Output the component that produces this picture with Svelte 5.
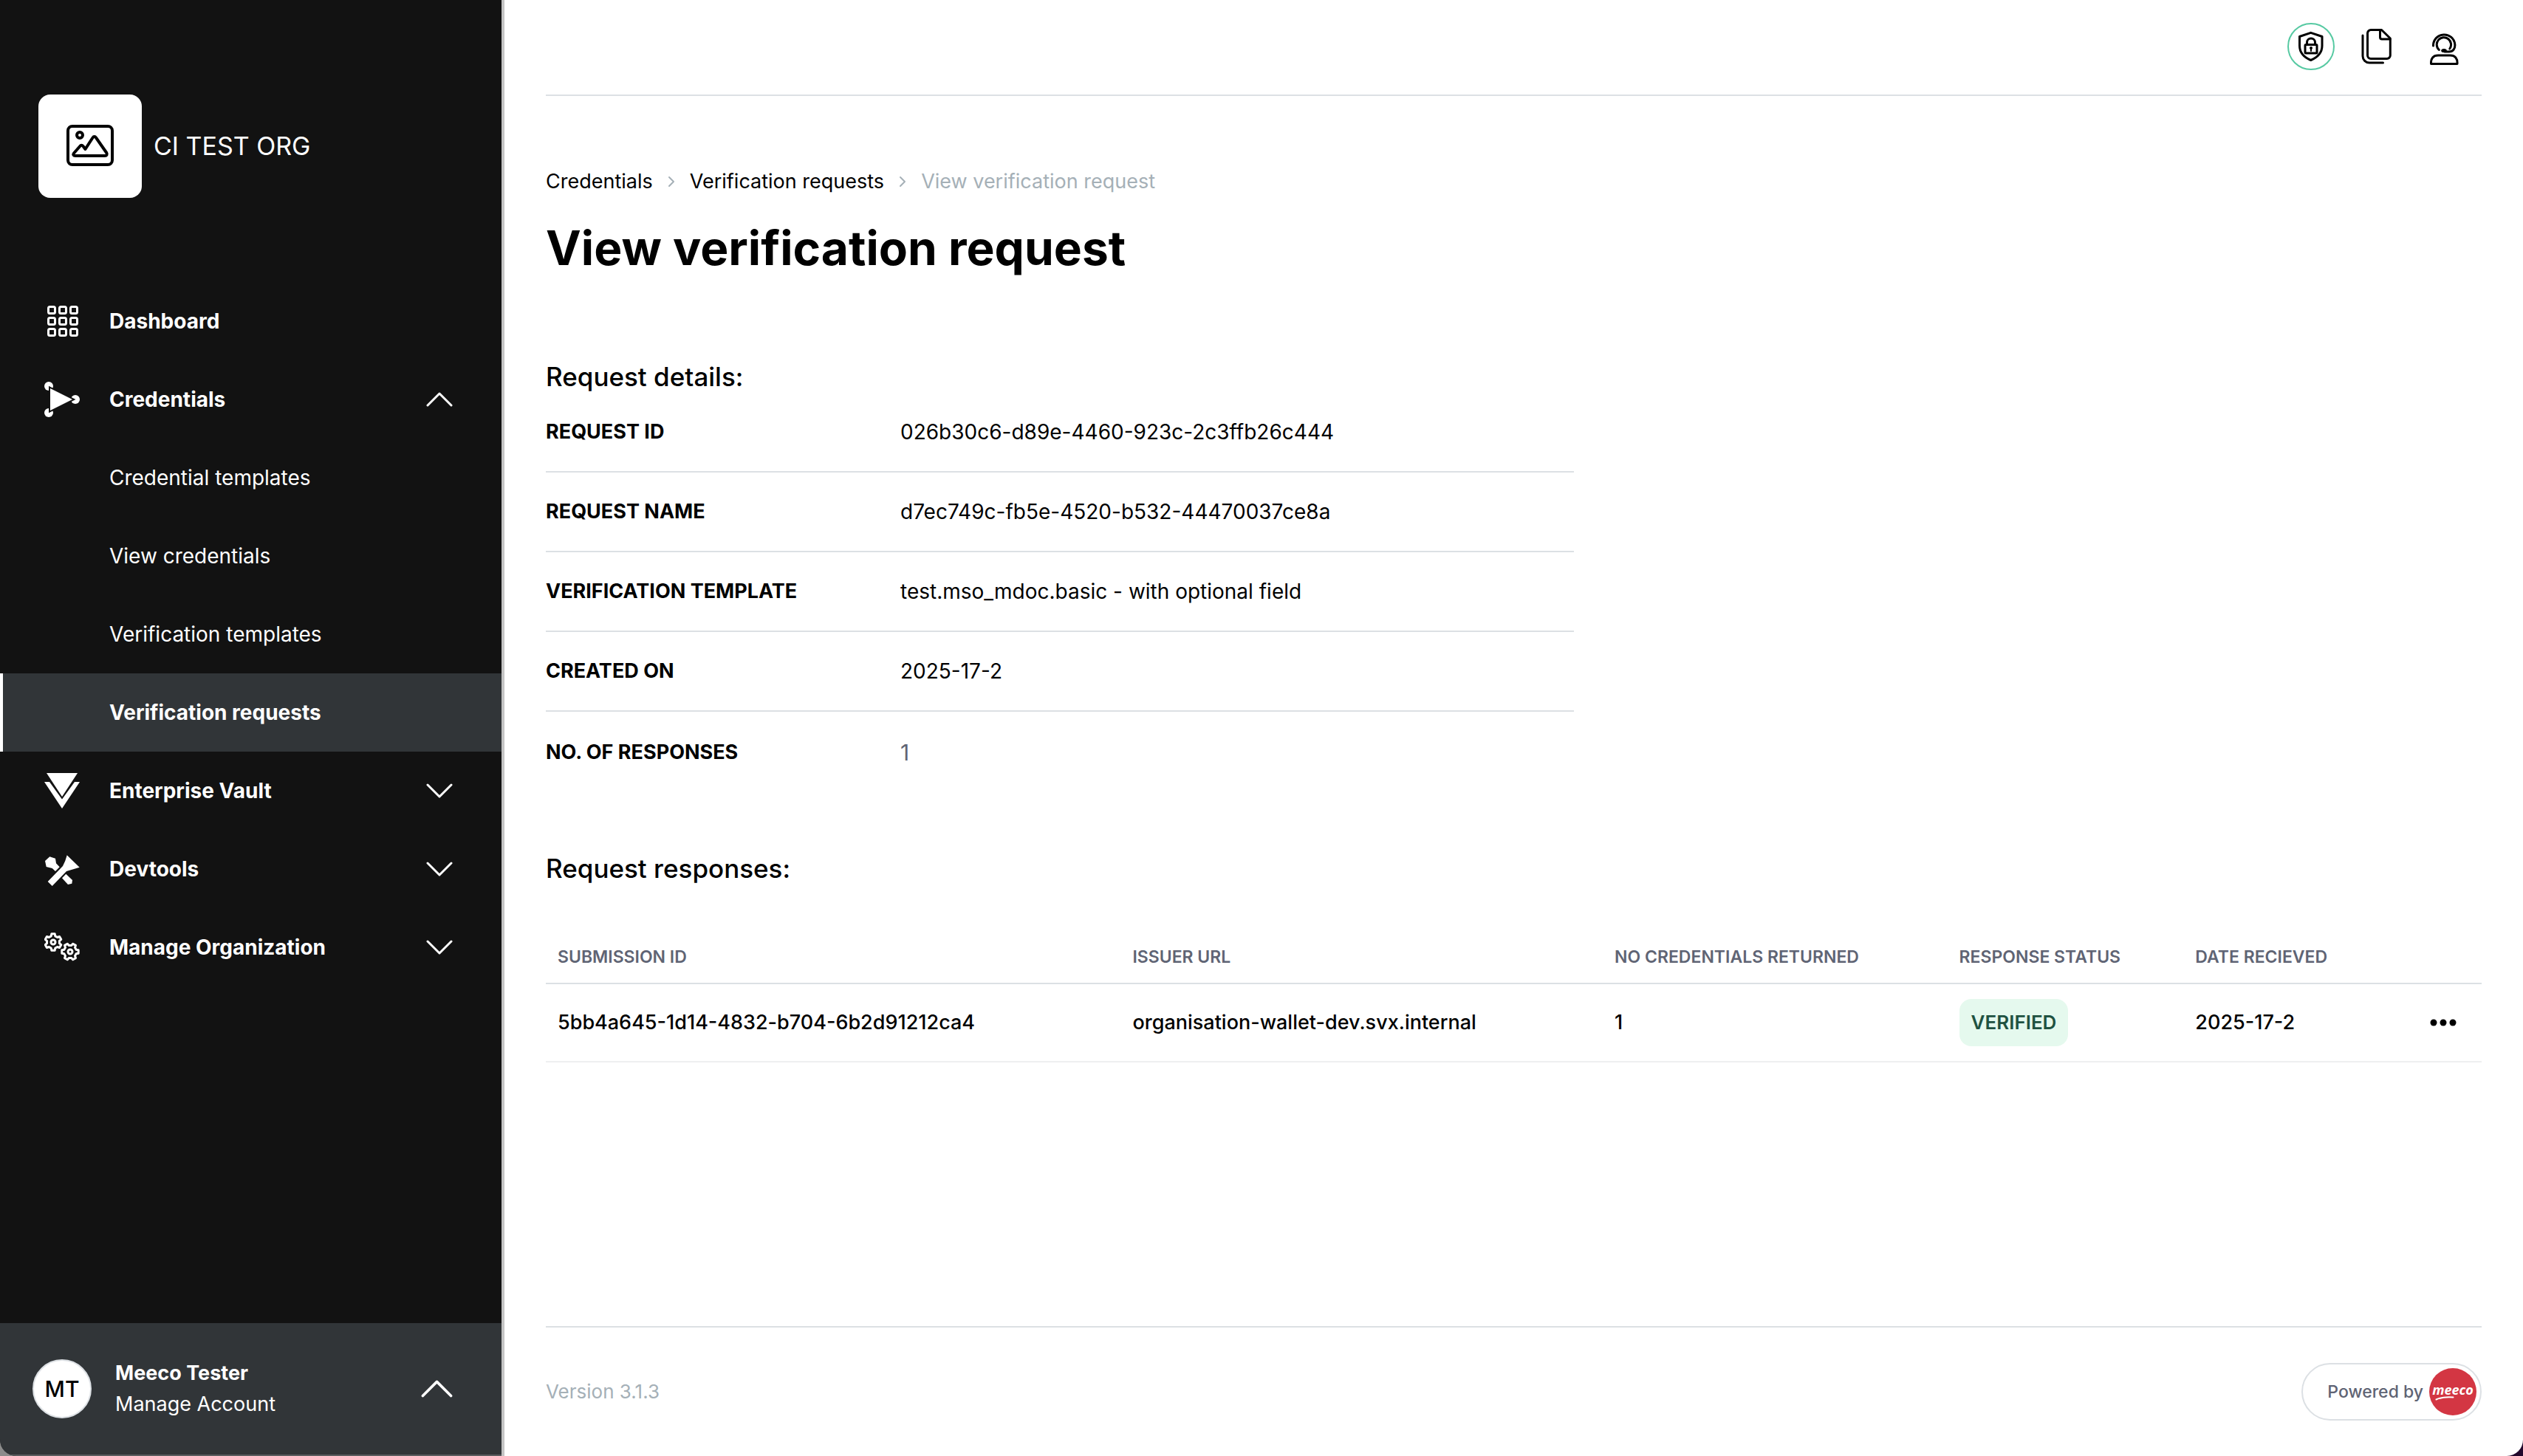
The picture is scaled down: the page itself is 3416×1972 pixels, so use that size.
<script>
  const subItems = [
    { label: 'Credential templates' },
    { label: 'View credentials' },
    { label: 'Verification templates' },
    { label: 'Verification requests', active: true }
  ];

  const details = [
    ['Request ID', '026b30c6-d89e-4460-923c-2c3ffb26c444'],
    ['Request name', 'd7ec749c-fb5e-4520-b532-44470037ce8a'],
    ['Verification template', 'test.mso_mdoc.basic - with optional field'],
    ['Created on', '2025-17-2'],
    ['No. of responses', '1']
  ];

  const responses = [
    {
      id: '5bb4a645-1d14-4832-b704-6b2d91212ca4',
      issuer: 'organisation-wallet-dev.svx.internal',
      count: 1,
      status: 'Verified',
      date: '2025-17-2'
    }
  ];

  const grid = [0, 1, 2].flatMap((r) => [0, 1, 2].map((c) => [c, r]));

  // Six-toothed gear outline around (cx, cy); `turn` rotates the first tooth.
  function gear(cx, cy, turn) {
    const points = [];
    for (let i = 0; i < 6; i++) {
      const a = turn + i * 60;
      for (const [offset, r] of [[-19, 8.6], [-11, 11.4], [11, 11.4], [19, 8.6]]) {
        const t = ((a + offset) * Math.PI) / 180;
        points.push(`${(cx + r * Math.sin(t)).toFixed(2)} ${(cy - r * Math.cos(t)).toFixed(2)}`);
      }
    }
    return `M${points.join('L')}Z`;
  }
</script>

{#snippet chevron(up)}
  <svg class="chevron" class:up viewBox="0 0 36 20" aria-hidden="true">
    <path d="M2 2 18 18 34 2" />
  </svg>
{/snippet}

<div class="app">
  <aside class="sidebar">
    <div class="org">
      <span class="org-logo">
        <svg viewBox="0 0 64 58" aria-hidden="true">
          <rect x="2" y="2" width="60" height="52" rx="6" />
          <circle cx="18" cy="14" r="4" />
          <path d="M12 42h40c2.5 0 3.500-2 2.300-4L40 17.500c-1.300-2-3.200-2-4.500 0L25.500 33l-3-4c-1.300-1.600-3-1.600-4.200 0L10 38.500C8.500 40.500 9.500 42 12 42Z" />
        </svg>
      </span>
      <span class="org-name">CI TEST ORG</span>
    </div>

    <nav aria-label="Main">
      <a class="item" href="#dashboard">
        <svg class="icon" viewBox="0 0 48 48" aria-hidden="true">
          {#each grid as [c, r]}
            <rect class="line" x={5.5 + c * 15} y={4.5 + r * 15} width="9" height="9" rx="2" />
          {/each}
        </svg>
        <span>Dashboard</span>
      </a>

      <button class="item" type="button" aria-expanded="true">
        <svg class="icon" viewBox="0 0 48 48" aria-hidden="true">
          <circle cx="6" cy="6" r="6" />
          <circle cx="6" cy="42" r="6" />
          <circle cx="42" cy="24" r="6" />
          <path class="halo" d="M8 9 38 24 8 39Z" />
          <path d="M8 9 38 24 8 39Z" />
        </svg>
        <span>Credentials</span>
        {@render chevron(true)}
      </button>

      {#each subItems as item}
        <a class="item sub" class:active={item.active} href="#{item.label.replace(' ', '-').toLowerCase()}" aria-current={item.active ? 'page' : undefined}>
          <span>{item.label}</span>
        </a>
      {/each}

      <button class="item" type="button" aria-expanded="false">
        <svg class="icon" viewBox="0 0 48 48" aria-hidden="true">
          <path d="M3 0h42L24 32Z" />
          <path d="M0 12h7l17 23.500L41 12h7L24 48Z" />
        </svg>
        <span>Enterprise Vault</span>
        {@render chevron(false)}
      </button>

      <button class="item" type="button" aria-expanded="false">
        <svg class="icon" viewBox="0 0 48 48" aria-hidden="true">
          <path d="M30.700 5.300 47.700 21.700 30 27 10.700 47 4.700 41 25 20Q28.500 14 30.700 5.300Z" />
          <path d="M7.300 7.300 15 9.700 16 16.300 20.700 21.300 15 27 10.700 23 2.700 21 1 13Z" />
          <path d="M29.300 30.700 38 39 37.300 43.700 32 45 24 36.300Z" />
        </svg>
        <span>Devtools</span>
        {@render chevron(false)}
      </button>

      <button class="item" type="button" aria-expanded="false">
        <svg class="icon" viewBox="0 0 48 48" aria-hidden="true">
          <path class="line" d={gear(12, 17, 0)} />
          <circle class="line" cx="12" cy="17" r="3" />
          <path class="line" d={gear(35, 30, 30)} />
          <circle class="line" cx="35" cy="30" r="3" />
        </svg>
        <span>Manage Organization</span>
        {@render chevron(false)}
      </button>
    </nav>

    <button class="account" type="button">
      <span class="avatar">MT</span>
      <span class="who">
        <strong>Meeco Tester</strong>
        <span>Manage Account</span>
      </span>
      {@render chevron(true)}
    </button>
  </aside>

  <div class="page">
    <header>
      <button type="button" aria-label="Security">
        <svg class="shield" viewBox="0 0 64 64" aria-hidden="true">
          <circle class="ring" cx="32" cy="32" r="31" />
          <path d="M31.700 13.300 47 18.500V31c0 9-6 15.500-15.300 19.500C22.400 46.500 16.500 40 16.500 31V18.500Z" />
          <rect x="24" y="29.5" width="16" height="11.5" rx="1" />
          <path d="M26.500 29.500V26.500a5.500 5.500 0 0 1 11 0v3" />
          <circle class="dot" cx="32" cy="34" r="2" />
          <path class="thin" d="M32 34v4" />
        </svg>
      </button>
      <button type="button" aria-label="Documents">
        <svg class="docs" viewBox="0 0 41 48" aria-hidden="true">
          <path d="M13 1.500H27.500L39.300 13V36a4.500 4.500 0 0 1-4.500 4.500H13A4.500 4.500 0 0 1 8.500 36V6A4.500 4.500 0 0 1 13 1.500Z" />
          <path d="M25.500 2V11.500A2.500 2.500 0 0 0 28 14H39" />
          <path d="M2 9V37a9 9 0 0 0 9 9H29.500" />
        </svg>
      </button>
      <button type="button" aria-label="Support">
        <svg class="support" viewBox="0 -5 40 49" aria-hidden="true">
          <path d="M4.500 18V17A14.700 14.700 0 0 1 33.800 16C34.500 22 31 26 26 26H20" />
          <path d="M12.300 23.500A9.700 9.700 0 1 1 26.800 22" />
          <ellipse class="dot" cx="19" cy="24.500" rx="3.8" ry="2.6" />
          <path d="M1.500 42.500C1 35 4.500 31 11 31H27.500C34 31 37.500 35 37 42.500Z" />
        </svg>
      </button>
    </header>

    <main>
      <nav class="crumbs" aria-label="Breadcrumb">
        <a href="#credentials">Credentials</a>
        <svg viewBox="0 0 10 16" aria-hidden="true"><path d="M2 2 8 8 2 14" /></svg>
        <a href="#verification-requests">Verification requests</a>
        <svg viewBox="0 0 10 16" aria-hidden="true"><path d="M2 2 8 8 2 14" /></svg>
        <span aria-current="page">View verification request</span>
      </nav>
      <h1>View verification request</h1>

      <section class="details">
        <h2>Request details:</h2>
        <dl>
          {#each details as [name, value]}
            <div>
              <dt>{name}</dt>
              <dd>{value}</dd>
            </div>
          {/each}
        </dl>
      </section>

      <section class="responses">
        <h2>Request responses:</h2>
        <table>
          <thead>
            <tr>
              <th class="c-id">Submission ID</th>
              <th class="c-issuer">Issuer URL</th>
              <th class="c-count">No credentials returned</th>
              <th class="c-status">Response status</th>
              <th>Date recieved</th>
              <th class="c-more" aria-label="Actions"></th>
            </tr>
          </thead>
          <tbody>
            {#each responses as row}
              <tr>
                <td>{row.id}</td>
                <td>{row.issuer}</td>
                <td>{row.count}</td>
                <td><span class="badge">{row.status}</span></td>
                <td>{row.date}</td>
                <td class="more">
                  <button type="button" aria-label="More actions">
                    <svg viewBox="0 0 36 10" aria-hidden="true">
                      <circle cx="5" cy="5" r="4.500" />
                      <circle cx="18" cy="5" r="4.500" />
                      <circle cx="31" cy="5" r="4.500" />
                    </svg>
                  </button>
                </td>
              </tr>
            {/each}
          </tbody>
        </table>
      </section>
    </main>

    <footer>
      <span>Version 3.1.3</span>
      <a class="powered" href="#meeco">
        Powered by
        <span class="brand">
          <span>meeco</span>
          <svg viewBox="0 0 26 6" aria-hidden="true"><path d="M1.500 4.500Q10 .5 24.500 1.500" /></svg>
        </span>
      </a>
    </footer>
  </div>
</div>

<style>
  :global(body) {
    background: linear-gradient(to right, #8c8c8c 50%, #22082c 50%);
  }

  .app {
    display: grid;
    grid-template-columns: 683px 1fr;
    min-height: 100vh;
    overflow: hidden;
    border-radius: 0 0 22px 22px;
    background: #fff;
    color: #000;
    font-family: Inter, 'Liberation Sans', sans-serif;
    font-size: 27px;
    line-height: 40px;
  }

  a {
    color: inherit;
    text-decoration: none;
  }

  button {
    padding: 0;
    border: 0;
    background: none;
    color: inherit;
    font: inherit;
    text-align: left;
    cursor: pointer;
  }

  svg {
    display: block;
    flex: none;
    fill: none;
    stroke: currentColor;
    stroke-linecap: round;
    stroke-linejoin: round;
  }

  /* Sidebar */
  .sidebar {
    display: flex;
    flex-direction: column;
    border-right: 4px solid #c4c4c4;
    background: #121212;
    color: #fff;
  }

  .org {
    display: flex;
    align-items: center;
    gap: 16px;
    padding: 128px 52px 114px;
  }

  .org-logo {
    display: grid;
    place-items: center;
    width: 140px;
    height: 140px;
    border-radius: 16px;
    background: #fff;
    color: #000;
  }

  .org-logo svg {
    width: 64px;
    stroke-width: 4;
  }

  .org-name {
    font-size: 34px;
  }

  .item {
    display: flex;
    align-items: center;
    gap: 40px;
    box-sizing: border-box;
    width: 100%;
    height: 106px;
    padding: 0 66px 0 60px;
    font-size: 28px;
    font-weight: 700;
  }

  .icon {
    width: 48px;
    fill: currentColor;
    stroke: none;
  }

  .icon .line {
    fill: none;
    stroke: currentColor;
    stroke-width: 3;
  }

  .icon .halo {
    stroke: #121212;
    stroke-width: 4;
    stroke-linejoin: miter;
  }

  .chevron {
    width: 36px;
    margin-left: auto;
    stroke-width: 3;
  }

  .chevron.up {
    transform: scaleY(-1);
  }

  .sub {
    padding-left: 148px;
    font-weight: 400;
  }

  .sub.active {
    padding-left: 144px;
    border-left: 4px solid #fff;
    background: #313538;
    font-weight: 700;
  }

  .account {
    display: flex;
    align-items: center;
    box-sizing: border-box;
    width: 100%;
    height: 180px;
    margin-top: auto;
    padding: 0 66px 0 44px;
    border-bottom: 2px solid #5b5d5f;
    background: #313538;
  }

  .avatar {
    display: grid;
    place-items: center;
    box-sizing: border-box;
    width: 80px;
    height: 80px;
    margin-right: 32px;
    border: 2px solid #dce0e4;
    border-radius: 50%;
    background: #fff;
    color: #000;
    font-size: 30px;
    font-weight: 500;
  }

  .who {
    display: grid;
    line-height: 42px;
  }

  .account .chevron {
    width: 43px;
  }

  /* Page */
  .page {
    display: flex;
    flex-direction: column;
    min-width: 0;
    padding: 0 56px;
  }

  header {
    display: flex;
    align-items: center;
    justify-content: flex-end;
    box-sizing: border-box;
    height: 130px;
    padding: 0 30px 2px 0;
    border-bottom: 2px solid #dce0e4;
  }

  header svg {
    stroke-width: 3;
  }

  .shield {
    width: 64px;
    margin-right: 36px;
  }

  .shield .ring {
    stroke: #56c9a2;
    stroke-width: 2;
  }

  .shield .thin {
    stroke-width: 2;
  }

  .dot {
    fill: currentColor;
    stroke: none;
  }

  .docs {
    width: 41px;
    margin-right: 52px;
  }

  .support {
    width: 40px;
  }

  main {
    padding-top: 96px;
  }

  .crumbs {
    display: flex;
    align-items: center;
    gap: 20px;
  }

  .crumbs svg {
    width: 10px;
    color: #a5b0b7;
    stroke-width: 2;
  }

  .crumbs span,
  footer {
    color: #a5b0b7;
  }

  h1 {
    margin: 30px 0 112px;
    font-size: 64px;
    font-weight: 700;
    line-height: 80px;
  }

  h2 {
    margin: 0;
    font-size: 35px;
    font-weight: 500;
    line-height: 44px;
  }

  dl {
    width: 53.1%;
    margin: 0;
  }

  dl div {
    display: flex;
    align-items: center;
    height: 106px;
    border-bottom: 2px solid #dce0e4;
  }

  dl div:last-child {
    height: 110px;
    border-bottom: 0;
  }

  dt {
    width: 480px;
    font-weight: 700;
    text-transform: uppercase;
  }

  dd {
    margin: 0;
    font-size: 28px;
  }

  dl div:last-child dd {
    color: #5f6474;
    font-size: 30px;
  }

  .responses {
    margin-top: 80px;
  }

  table {
    width: 100%;
    margin-top: 62px;
    border-collapse: collapse;
    table-layout: fixed;
  }

  th,
  td {
    box-sizing: border-box;
    padding: 0 0 0 16px;
    text-align: left;
    white-space: nowrap;
  }

  th {
    height: 72px;
    border-bottom: 2px solid #dce0e4;
    color: #5f6474;
    font-size: 23px;
    font-weight: 600;
    text-transform: uppercase;
  }

  td {
    height: 106px;
    border-bottom: 2px solid #eeeff0;
    font-weight: 500;
  }

  .c-id {
    width: 29.7%;
  }

  .c-issuer {
    width: 24.9%;
  }

  .c-count {
    width: 17.8%;
  }

  .c-status {
    width: 12.2%;
  }

  .c-more {
    width: 100px;
  }

  .more button {
    display: block;
    margin-left: auto;
    margin-right: 34px;
  }

  .more svg {
    width: 36px;
    fill: currentColor;
    stroke: none;
  }

  .badge {
    display: inline-block;
    padding: 0 16px;
    border-radius: 16px;
    background: #e5f9ee;
    color: #1f5241;
    font-size: 26px;
    font-weight: 600;
    line-height: 64px;
    text-transform: uppercase;
  }

  footer {
    display: flex;
    align-items: center;
    justify-content: space-between;
    margin-top: auto;
    padding: 48px 0;
    border-top: 2px solid #dce0e4;
    font-size: 26px;
  }

  .powered {
    display: flex;
    align-items: center;
    gap: 8px;
    height: 74px;
    padding: 0 5px 0 33px;
    border: 2px solid #dce0e4;
    border-radius: 40px;
    color: #5f6474;
    font-size: 23px;
    font-weight: 500;
  }

  .brand {
    display: grid;
    align-content: center;
    justify-items: center;
    width: 64px;
    height: 64px;
    border-radius: 50%;
    background: #d33643;
    color: #fff;
    font-family: 'Open Sans', sans-serif;
    font-size: 18px;
    font-style: italic;
    font-weight: 700;
    line-height: 18px;
  }

  .brand svg {
    width: 26px;
    margin-right: 22px;
    stroke-width: 2;
  }
</style>
